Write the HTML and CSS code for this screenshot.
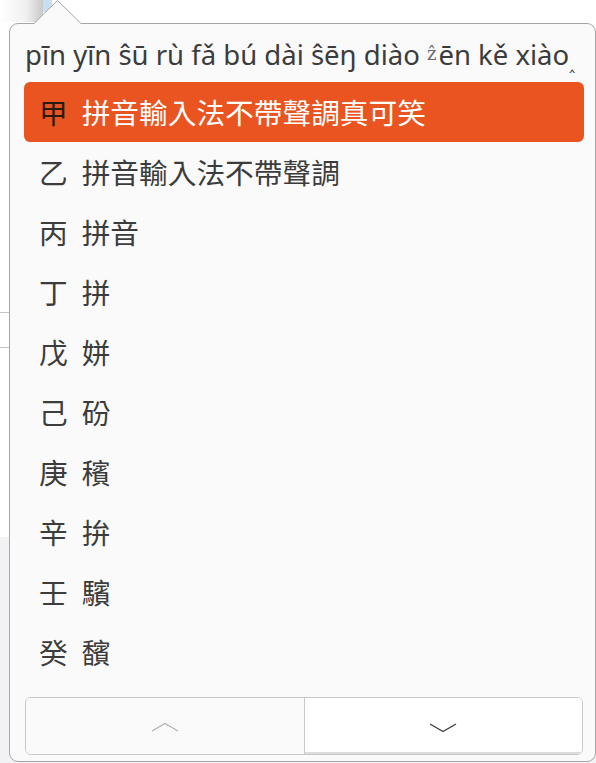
FILE: index.html
```html
<!DOCTYPE html>
<html lang="zh-Hant">
<head>
    <meta charset="UTF-8">
    <meta name="viewport" content="width=device-width, initial-scale=1.0">
    <title>候選詞</title>
    <link rel="stylesheet" href="styles.css">
</head>
<body>
    <!-- 背景窗口（被候選框遮住） -->
    <div class="page">
        <div class="page-top">
            <div class="page-shade"></div>
            <div class="page-blue"></div>
        </div>
        <div class="page-rule rule-1"></div>
        <div class="page-rule rule-2"></div>
        <div class="page-foot"></div>
    </div>

    <!-- 候選框 -->
    <div class="popover">
        <svg class="arrow" width="51" height="24" viewBox="0 0 51 24">
            <polygon points="0,24.5 24.5,0.5 49,24.5" fill="#fafafa" stroke="#a6a6a6" stroke-width="1"/>
        </svg>
        <div class="panel">
            <div class="preedit">pīn yīn ŝū rù fǎ bú dài ŝēŋ diào <span class="odd">ẑ</span>ēn kě xiào<span class="caret">‸</span></div>

            <ul class="candidates">
                <li class="cand active"><span class="label">甲</span><span class="word">拼音輸入法不帶聲調真可笑</span></li>
                <li class="cand"><span class="label">乙</span><span class="word">拼音輸入法不帶聲調</span></li>
                <li class="cand"><span class="label">丙</span><span class="word">拼音</span></li>
                <li class="cand"><span class="label">丁</span><span class="word">拼</span></li>
                <li class="cand"><span class="label">戊</span><span class="word">姘</span></li>
                <li class="cand"><span class="label">己</span><span class="word">砏</span></li>
                <li class="cand"><span class="label">庚</span><span class="word">穦</span></li>
                <li class="cand"><span class="label">辛</span><span class="word">拚</span></li>
                <li class="cand"><span class="label">壬</span><span class="word">驞</span></li>
                <li class="cand"><span class="label">癸</span><span class="word">馪</span></li>
            </ul>

            <div class="pager">
                <button class="page-btn prev" disabled>
                    <svg width="28" height="10" viewBox="0 0 28 10"><polyline points="1,9 14,1.5 27,9" fill="none" stroke="#b4b4b4" stroke-width="1.4"/></svg>
                </button>
                <button class="page-btn next">
                    <svg width="28" height="10" viewBox="0 0 28 10"><polyline points="1,1 14,8.5 27,1" fill="none" stroke="#404040" stroke-width="1.4"/></svg>
                </button>
            </div>
        </div>
    </div>
</body>
</html>
```

FILE: styles.css
```css
body {
    margin: 0;
    width: 596px;
    height: 763px;
    overflow: hidden;
    background-color: #fff;
    font-family: "Noto Sans", "Noto Sans CJK TC", sans-serif;
    color: #3c3c3c;
}

/* 背景窗口 */
.page {
    height: 763px;
    display: flex;
    flex-direction: column;
}

.page-top {
    display: flex;
    height: 22px;
}

.page-shade {
    width: 43px;
    background: linear-gradient(to right, #ffffff, #f0f0f0 60%, #c9c9c9);
}

.page-blue {
    width: 9px;
    height: 12px;
    background-color: #c8dff3;
}

.page-rule {
    width: 9px;
    height: 1px;
    background-color: #c4c4c4;
}

.rule-1 {
    margin-top: 290px; /* y = 312 */
}

.rule-2 {
    margin-top: 34px; /* y = 347 */
}

.page-foot {
    margin-top: 189px; /* y = 537 */
    flex: 1;
    background-color: #f2f2f4;
}

/* 候選框 */
.popover {
    position: absolute;
    left: 9px;
    top: 0;
    width: 587px;
}

.arrow {
    display: block;
    position: relative;
    z-index: 1;
    margin-left: 24px;
    margin-bottom: -1px;
}

.panel {
    box-sizing: border-box;
    height: 739px;
    border: 1px solid #a6a6a6;
    border-radius: 9px;
    background-color: #fafafa;
    padding: 0 11px 0 14px;
}

.preedit {
    height: 43px;
    padding: 15px 0 0 1px;
    font-size: 27.5px;
    line-height: 30px;
    white-space: nowrap;
    overflow: hidden;
}

.preedit .odd {
    font-family: "DejaVu Serif", serif;
    font-size: 18px;
    color: #666;
    vertical-align: 5px;
    margin-right: 2px;
}

.preedit .caret {
    font-family: "DejaVu Sans", sans-serif;
    font-size: 17px;
    vertical-align: -4px;
}

.candidates {
    list-style: none;
    margin: 0;
    padding: 0;
}

.cand {
    display: flex;
    align-items: center;
    height: 60px;
    padding-left: 15px;
    border-radius: 6px;
    font-family: "Noto Sans CJK TC", sans-serif;
    font-size: 28.7px;
    line-height: 1;
}

.cand .label {
    margin-right: 14px;
}

.cand.active {
    background-color: #e95420;
}

.cand.active .label {
    color: #2b1a12;
}

.cand.active .word {
    color: #fff;
}

.pager {
    display: flex;
    height: 56px;
    margin: 15px 1px 0 1px;
    border: 1px solid #c8c8c8;
    border-radius: 6px;
    overflow: hidden;
}

.page-btn {
    flex: 1;
    border: none;
    margin: 0;
    padding: 0;
    display: flex;
    align-items: center;
    justify-content: center;
}

.page-btn.prev {
    background-color: #fafafa;
    border-right: 1px solid #c8c8c8;
    padding-top: 1px;
}

.page-btn.next {
    background-color: #fff;
    box-shadow: inset 0 -2px 0 #dcdcdc;
    padding-top: 3px;
}
```
